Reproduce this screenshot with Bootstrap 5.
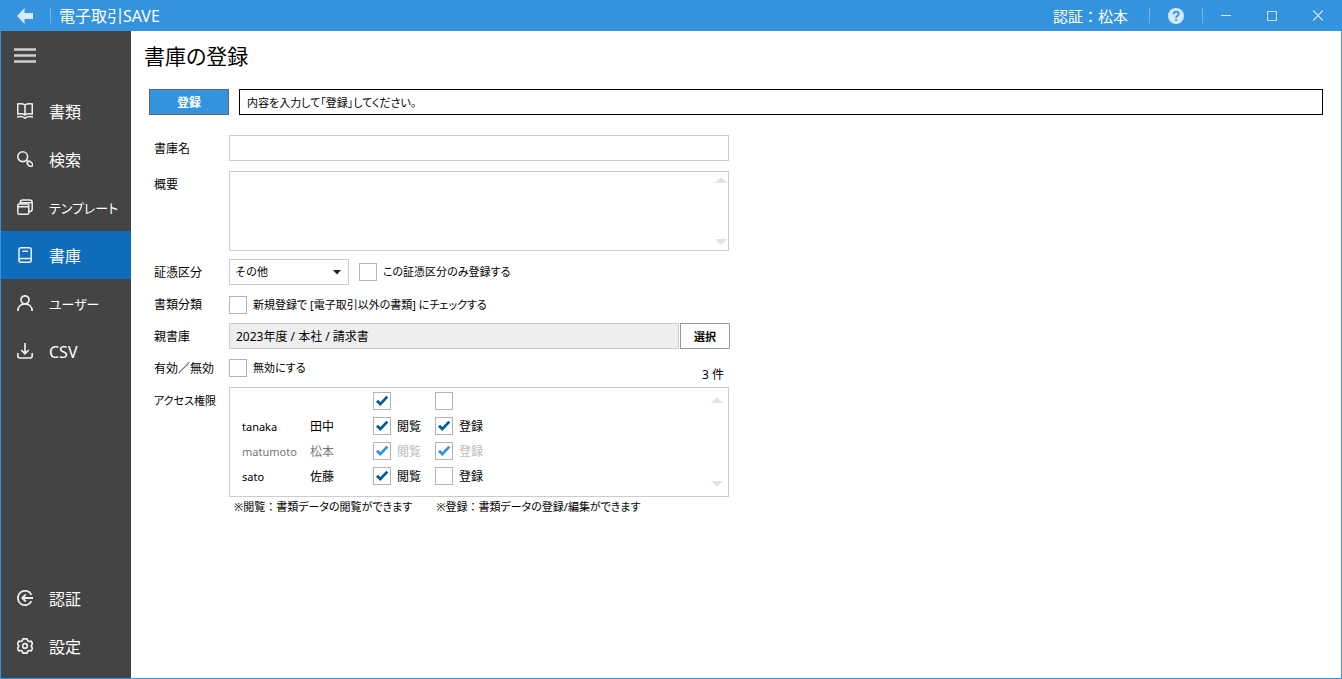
<!DOCTYPE html>
<html lang="ja">
<head>
<meta charset="utf-8">
<meta name="viewport" content="width=device-width, initial-scale=1">
<title>電子取引SAVE</title>
<link rel="stylesheet" href="https://cdn.jsdelivr.net/npm/bootstrap@5.3.0/dist/css/bootstrap.min.css">
<style>
  :root { --app-blue: #3393df; --app-line: #cccccc; }
  body {
    font-family: "Noto Sans", "Noto Sans CJK JP", sans-serif;
    font-feature-settings: "palt";
    font-size: 12px; line-height: 18px; color: #000; background: #fff;
  }
  svg { display: block; flex: none; }
  .fullwidth { font-feature-settings: normal; }
  .kana-text { font-size: 11px; }

  /* title bar */
  .titlebar { background: var(--app-blue); height: 31px; color: #fff; font-size: 16px; padding-right: 1px; }
  .titlebar button { background: none; border: 0; padding: 0; height: 31px; color: #d6e9f9; }
  .back-btn { width: 50px; }
  .help-btn { width: 52px; }
  .win-btn { width: 46px; }
  .bar-sep { width: 1px; height: 15px; background: #70b3e9; }
  .app-name { margin-left: 8px; }
  .auth-user { font-size: 15px; margin-right: 21px; }

  /* frame and side menu */
  .app-frame { border: 1px solid var(--app-blue); border-top: 0; }
  .sidebar { width: 130px; background: #444; padding-bottom: 8px; }
  .menu-btn { background: none; border: 0; height: 48px; margin-bottom: 8px; padding: 2px 13px 0; color: #d0d0d0; text-align: left; }
  .sidebar .nav-link {
    display: flex; align-items: center; gap: 16px; height: 48px; padding: 0 0 0 16px;
    color: #fff; font-size: 16px; white-space: nowrap; border-radius: 0;
  }
  .sidebar .nav-link span { padding-top: 2px; }
  .sidebar .nav-link.kana-item { font-size: 13px; }
  .sidebar .nav-link svg { color: #eee; }
  .sidebar .nav-link.active { background: #0f6cbd; }

  /* page */
  .page-title { font-size: 21px; line-height: 28px; font-weight: 400; margin: 0; padding: 11px 0 0 13px; }
  .action-row { padding: 19px 18px 0; gap: 10px; }
  .btn-plain { border-radius: 0; font-size: 12px; line-height: 18px; font-weight: 700; padding: 4px 0 2px; height: 26px; }
  .btn-save { width: 80px; background: var(--app-blue); color: #fff; border: 1px solid #666; }
  .btn-pick { width: 50px; background: #fff; color: #000; border: 1px solid #999; font-size: 11px; }
  .message { border: 1px solid #000; height: 26px; padding: 4px 7px 2px; }

  .entry-form { padding: 20px 18px 0 23px; }
  .entry-row { display: grid; grid-template-columns: 75px minmax(0, 500px); margin-bottom: 6px; }
  .entry-row.first-row { margin-bottom: 10px; }
  .row-label { line-height: 26px; height: 26px; padding-top: 1px; white-space: nowrap; }
  .field-line { display: flex; align-items: center; min-height: 26px; }
  .entry-form .form-control, .entry-form .form-select {
    border: 1px solid var(--app-line); border-radius: 0; font-size: 12px; line-height: 18px;
    padding: 3px 6px; color: #000; height: 26px;
  }
  .entry-form .form-select {
    width: 120px; padding-left: 5px; font-size: 11px;
    background: #fff url("data:image/svg+xml,%3Csvg xmlns='http://www.w3.org/2000/svg' viewBox='0 0 8 5'%3E%3Cpath d='M0 0h8L4 4.6z' fill='%23222'/%3E%3C/svg%3E") no-repeat right 7px center / 8px 5px;
  }
  .entry-form textarea.form-control { height: 80px; resize: none; overflow: hidden; }
  .kind-line { gap: 10px; }
  .outside-line { padding-top: 2px; }
  .parent-line { gap: 1px; margin-right: -1px; }
  .entry-form .form-control[readonly] { background: #eee; width: auto; flex: 1; }
  .scroll-cues { position: absolute; top: 6px; right: 2px; bottom: 6px; color: #e3e3e3;
    display: flex; flex-direction: column; justify-content: space-between; pointer-events: none; }
  .access-box .scroll-cues { top: 9px; right: 5px; bottom: 9px; }
  .item-count { line-height: 12px; padding-right: 5px; }

  .tick { display: inline-flex; align-items: center; gap: 6px; white-space: nowrap; }
  .tick input {
    appearance: none; flex: none; width: 18px; height: 18px; margin: 0;
    border: 1px solid #b4b4b4; background: #fff center / 16px 16px no-repeat;
  }
  .tick input:checked { background-image: url("data:image/svg+xml,%3Csvg xmlns='http://www.w3.org/2000/svg' viewBox='0 0 16 16'%3E%3Cpath d='M3 7.800l3.300 3.300 7-7.500' fill='none' stroke='%23005a9e' stroke-width='2.800'/%3E%3C/svg%3E"); }
  .tick input:checked:disabled { background-image: url("data:image/svg+xml,%3Csvg xmlns='http://www.w3.org/2000/svg' viewBox='0 0 16 16'%3E%3Cpath d='M3 7.800l3.300 3.300 7-7.500' fill='none' stroke='%233393df' stroke-width='2.800'/%3E%3C/svg%3E"); }

  .access-box { border: 1px solid var(--app-line); height: 110px; padding: 0 12px; }
  .access-table { table-layout: fixed; width: 260px; border-collapse: collapse; }
  .access-table td { height: 25px; padding: 0; vertical-align: middle; }
  .access-table td.who { padding-top: 2px; }
  .access-table .tick { display: flex; }
  .access-table .tick span { padding-top: 2px; }
  .col-login { width: 68px; }
  .col-person { width: 63px; }
  .col-view { width: 62px; }
  .is-locked { color: #777; }
  .is-locked .tick { color: #bdbdbd; }
  .notes { padding: 1px 0 0 5px; gap: 24px; }
</style>
</head>
<body class="d-flex flex-column min-vh-100">

<header class="titlebar d-flex align-items-center">
  <button type="button" class="back-btn d-flex align-items-center justify-content-center" aria-label="戻る">
    <svg width="16" height="16" viewBox="0 0 16 16"><path d="M0 8l7.500-8v5H16v6H7.500v5z" fill="currentColor"/></svg>
  </button>
  <span class="bar-sep"></span>
  <span class="app-name">電子取引SAVE</span>
  <span class="auth-user fullwidth ms-auto">認証：松本</span>
  <span class="bar-sep"></span>
  <button type="button" class="help-btn d-flex align-items-center justify-content-center" aria-label="ヘルプ">
    <svg width="16" height="16" viewBox="0 0 16 16"><circle cx="8" cy="8" r="8" fill="currentColor"/><path d="M5.600 6.300C5.600 4.700 6.600 3.700 8.100 3.700s2.500.9 2.500 2.200C10.600 7.700 8.100 7.900 8.100 10" fill="none" stroke="#3393df" stroke-width="1.800"/><rect x="7.200" y="11.200" width="1.800" height="1.800" fill="#3393df"/></svg>
  </button>
  <span class="bar-sep"></span>
  <button type="button" class="win-btn d-flex align-items-center justify-content-center" aria-label="最小化">
    <svg width="10" height="11" viewBox="0 0 10 11"><path d="M0 5.500h10" stroke="currentColor"/></svg>
  </button>
  <button type="button" class="win-btn d-flex align-items-center justify-content-center" aria-label="最大化">
    <svg width="10" height="11" viewBox="0 0 10 11"><path d="M.5 1.500h9v9h-9z" fill="none" stroke="currentColor"/></svg>
  </button>
  <button type="button" class="win-btn d-flex align-items-center justify-content-center" aria-label="閉じる">
    <svg width="10" height="11" viewBox="0 0 10 11"><path d="M0 .5l10 10M10 .5l-10 10" stroke="currentColor" stroke-width="1.200"/></svg>
  </button>
</header>

<div class="app-frame d-flex flex-grow-1">
  <aside class="sidebar d-flex flex-column flex-shrink-0">
    <button type="button" class="menu-btn" aria-label="メニュー">
      <svg width="22" height="16" viewBox="0 0 22 16"><path d="M0 1.500h22M0 7.500h22M0 13.500h22" stroke="currentColor" stroke-width="2.400"/></svg>
    </button>
    <nav class="nav flex-column flex-nowrap flex-grow-1">
      <a class="nav-link" href="#docs">
        <svg width="16" height="16" viewBox="0 0 16 16" fill="none" stroke="currentColor" stroke-width="1.600"><path d="M8 2C6.500.8 3 .6.700 1v10c2.300-.4 5.800-.2 7.300 1 1.500-1.200 5-1.400 7.300-1V1C13 .6 9.500.8 8 2zM8 2v10M0 14c2.500-.7 5.500-.7 8 1 2.500-1.700 5.500-1.700 8-1"/></svg>
        <span>書類</span></a>
      <a class="nav-link" href="#search">
        <svg width="16" height="16" viewBox="0 0 16 16" fill="none" stroke="currentColor" stroke-width="1.600"><circle cx="5.700" cy="5.700" r="4.900"/><path d="M9.300 9.300l1.300 1.300"/><rect x="10" y="11" width="6" height="3.800" rx="1.900" transform="rotate(42 13 12.900)"/></svg>
        <span>検索</span></a>
      <a class="nav-link kana-item" href="#templates">
        <svg width="16" height="16" viewBox="0 0 16 16" fill="none" stroke="currentColor" stroke-width="1.500"><rect x=".8" y="5" width="11" height="10.200" rx="1.500"/><path d="M.8 7.800h11M3.200 4.800V4Q3.200 1 5.500 1H12.500Q15.200 1 15.200 3.500V10Q15.200 12.500 12 12.800M3.200 3.800H15"/></svg>
        <span>テンプレート</span></a>
      <a class="nav-link active" aria-current="page" href="#archives">
        <svg width="16" height="16" viewBox="0 0 16 16" fill="none" stroke="currentColor" stroke-width="1.500"><path d="M14.200 11.500H4Q2 11.500 2 13.300V2.700Q2 .8 4 .8H12.200Q14.200.8 14.200 2.700V13.300Q14.200 15.200 12.200 15.200H4Q2 15.200 2 13.300M5.500 4.200H11"/></svg>
        <span>書庫</span></a>
      <a class="nav-link kana-item" href="#users">
        <svg width="16" height="16" viewBox="0 0 16 16" fill="none" stroke="currentColor" stroke-width="1.700"><circle cx="8" cy="4.800" r="4"/><path d="M.8 16C1 11.500 4 8.900 8 8.900s7 2.600 7.200 7.100"/></svg>
        <span>ユーザー</span></a>
      <a class="nav-link" href="#csv">
        <svg width="16" height="16" viewBox="0 0 16 16" fill="none" stroke="currentColor" stroke-width="1.700"><path d="M8 0v10.500M4.200 7L8 10.700 11.800 7M.8 10v3Q.8 15 2.800 15H13.200Q15.200 15 15.200 13V10"/></svg>
        <span>CSV</span></a>
      <a class="nav-link mt-auto" href="#auth">
        <svg width="16" height="16" viewBox="0 0 16 16" fill="none" stroke="currentColor" stroke-width="1.800"><path d="M14.500 4.800A7.200 7.200 0 1 0 14.500 11.200M16 8H5.500M8.800 4.500L5.300 8l3.500 3.500"/></svg>
        <span>認証</span></a>
      <a class="nav-link" href="#settings">
        <svg width="16" height="16" viewBox="0 0 16 16" fill="none" stroke="currentColor" stroke-width="1.700" stroke-linejoin="round"><path d="M6 .8h4l.7 2 1.300.7 2.200-.4 1.400 2.700-1.300 1.700v1l1.300 1.700-1.400 2.700-2.200-.4-1.300.7-.7 2H6l-.7-2-1.300-.7-2.200.4L.4 10.200l1.300-1.700v-1L.4 5.800l1.400-2.700 2.200.4 1.300-.7z"/><circle cx="8" cy="8" r="2.300"/></svg>
        <span>設定</span></a>
    </nav>
  </aside>

  <main class="flex-grow-1">
    <h1 class="page-title">書庫の登録</h1>
    <div class="action-row d-flex">
      <button type="submit" form="archive-form" class="btn btn-plain btn-save">登録</button>
      <div class="message kana-text flex-grow-1" role="status">内容を入力して「登録」してください。</div>
    </div>

    <form id="archive-form" class="entry-form">
      <div class="entry-row first-row">
        <label class="row-label" for="name">書庫名</label>
        <input id="name" type="text" class="form-control">
      </div>
      <div class="entry-row mb-2">
        <label class="row-label" for="summary">概要</label>
        <div class="position-relative">
          <textarea id="summary" class="form-control"></textarea>
          <div class="scroll-cues">
            <svg width="12" height="6" viewBox="0 0 12 6"><path d="M6 0l6 6H0z" fill="currentColor"/></svg>
            <svg width="12" height="6" viewBox="0 0 12 6"><path d="M0 0h12L6 6z" fill="currentColor"/></svg>
          </div>
        </div>
      </div>
      <div class="entry-row">
        <label class="row-label" for="kind">証憑区分</label>
        <div class="field-line kind-line">
          <select id="kind" class="form-select"><option>その他</option></select>
          <label class="tick kana-text"><input type="checkbox"><span>この証憑区分のみ登録する</span></label>
        </div>
      </div>
      <div class="entry-row">
        <label class="row-label" for="outside">書類分類</label>
        <div class="field-line outside-line">
          <label class="tick kana-text"><input id="outside" type="checkbox"><span>新規登録で [電子取引以外の書類] にチェックする</span></label>
        </div>
      </div>
      <div class="entry-row">
        <label class="row-label" for="parent">親書庫</label>
        <div class="field-line parent-line">
          <input id="parent" type="text" class="form-control" value="2023年度 / 本社 / 請求書" readonly>
          <button type="button" class="btn btn-plain btn-pick">選択</button>
        </div>
      </div>
      <div class="entry-row">
        <label class="row-label" for="disable">有効／無効</label>
        <div class="field-line">
          <label class="tick kana-text"><input id="disable" type="checkbox"><span>無効にする</span></label>
          <span class="item-count ms-auto align-self-end">3 件</span>
        </div>
      </div>
      <div class="entry-row mb-0">
        <span class="row-label kana-text">アクセス権限</span>
        <div>
          <div class="access-box position-relative">
            <table class="access-table">
              <colgroup><col class="col-login"><col class="col-person"><col class="col-view"><col></colgroup>
              <tbody>
                <tr><td></td><td></td>
                  <td><span class="tick"><input type="checkbox" checked aria-label="すべて閲覧"></span></td>
                  <td><span class="tick"><input type="checkbox" aria-label="すべて登録"></span></td></tr>
                <tr><td class="who kana-text">tanaka</td><td class="who">田中</td>
                  <td><label class="tick"><input type="checkbox" checked><span>閲覧</span></label></td>
                  <td><label class="tick"><input type="checkbox" checked><span>登録</span></label></td></tr>
                <tr class="is-locked"><td class="who kana-text">matumoto</td><td class="who">松本</td>
                  <td><label class="tick"><input type="checkbox" checked disabled><span>閲覧</span></label></td>
                  <td><label class="tick"><input type="checkbox" checked disabled><span>登録</span></label></td></tr>
                <tr><td class="who kana-text">sato</td><td class="who">佐藤</td>
                  <td><label class="tick"><input type="checkbox" checked><span>閲覧</span></label></td>
                  <td><label class="tick"><input type="checkbox"><span>登録</span></label></td></tr>
              </tbody>
            </table>
            <div class="scroll-cues">
              <svg width="12" height="6" viewBox="0 0 12 6"><path d="M6 0l6 6H0z" fill="currentColor"/></svg>
              <svg width="12" height="6" viewBox="0 0 12 6"><path d="M0 0h12L6 6z" fill="currentColor"/></svg>
            </div>
          </div>
          <div class="notes kana-text d-flex">
            <span>※閲覧<span class="fullwidth">：</span>書類データの閲覧ができます</span>
            <span>※登録<span class="fullwidth">：</span>書類データの登録/編集ができます</span>
          </div>
        </div>
      </div>
    </form>
  </main>
</div>

<script src="https://cdn.jsdelivr.net/npm/bootstrap@5.3.0/dist/js/bootstrap.bundle.min.js"></script>
</body>
</html>
